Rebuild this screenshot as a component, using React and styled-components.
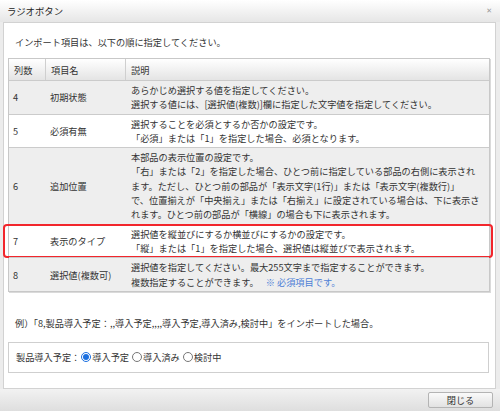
import React from 'react';
import styled, { createGlobalStyle } from 'styled-components';

const GlobalStyle = createGlobalStyle`
  html, body {
    margin: 0;
    padding: 0;
  }
  body {
    width: 500px;
    height: 411px;
    overflow: hidden;
    font-family: "Noto Sans CJK JP", "Noto Sans", sans-serif;
    font-size: 9.2px;
    color: #333;
    background: #ececec;
  }
`;

const rows = [
  {
    no: '4',
    name: '初期状態',
    lines: [
      'あらかじめ選択する値を指定してください。',
      '選択する値には、[選択値(複数)]欄に指定した文字値を指定してください。',
    ],
  },
  {
    no: '5',
    name: '必須有無',
    lines: [
      '選択することを必須とするか否かの設定です。',
      '「必須」または「1」を指定した場合、必須となります。',
    ],
  },
  {
    no: '6',
    name: '追加位置',
    lines: [
      '本部品の表示位置の設定です。',
      '「右」または「2」を指定した場合、ひとつ前に指定している部品の右側に表示され',
      'ます。ただし、ひとつ前の部品が「表示文字(1行)」または「表示文字(複数行)」',
      'で、位置揃えが「中央揃え」または「右揃え」に設定されている場合は、下に表示さ',
      'れます。ひとつ前の部品が「横線」の場合も下に表示されます。',
    ],
  },
  {
    no: '7',
    name: '表示のタイプ',
    marked: true,
    lines: [
      '選択値を縦並びにするか横並びにするかの設定です。',
      '「縦」または「1」を指定した場合、選択値は縦並びで表示されます。',
    ],
  },
  {
    no: '8',
    name: '選択値(複数可)',
    lines: [
      '選択値を指定してください。最大255文字まで指定することができます。',
      '複数指定することができます。',
    ],
    note: '※ 必須項目です。',
  },
];

function App() {
  return (
    <>
      <GlobalStyle />
      <Dialog>
        <TitleBar>
          <Title>ラジオボタン</Title>
          <CloseX>✕</CloseX>
        </TitleBar>
        <Frame>
          <Intro>インポート項目は、以下の順に指定してください。</Intro>
          <Table>
            <HeadRow>
              <HeadCell>列数</HeadCell>
              <HeadCell $divider>項目名</HeadCell>
              <HeadCell $divider>説明</HeadCell>
            </HeadRow>
            {rows.map((r, i) => (
              <Row key={r.no} $shade={i % 2 === 0} $marked={r.marked}>
                <Cell>{r.no}</Cell>
                <Cell>{r.name}</Cell>
                <Desc>
                  {r.lines.map((l, j) => (
                    <Line key={j}>
                      {l}
                      {r.note && j === r.lines.length - 1 && <Note>{r.note}</Note>}
                    </Line>
                  ))}
                </Desc>
              </Row>
            ))}
          </Table>
          <Example>
            例）「8,製品導入予定：,,導入予定,,,,導入予定,導入済み,検討中」をインポートした場合。
          </Example>
          <Preview>
            <span>製品導入予定：</span>
            <RadioLabel>
              <Radio type="radio" name="plan" defaultChecked />
              導入予定
            </RadioLabel>
            <RadioLabel>
              <Radio type="radio" name="plan" />
              導入済み
            </RadioLabel>
            <RadioLabel>
              <Radio type="radio" name="plan" />
              検討中
            </RadioLabel>
          </Preview>
        </Frame>
        <Footer>
          <CloseButton>閉じる</CloseButton>
        </Footer>
      </Dialog>
    </>
  );
}

const Dialog = styled.div`
  width: 500px;
  height: 411px;
  display: flex;
  flex-direction: column;
  background: #ececec;
`;

const TitleBar = styled.div`
  height: 22px;
  flex: none;
  display: flex;
  align-items: center;
  justify-content: space-between;
  padding: 0 8px 0 7px;
  background: linear-gradient(#ffffff, #e6e6e6);
`;

const Title = styled.div`
  font-size: 9.4px;
  color: #222;
`;

const CloseX = styled.div`
  font-size: 7px;
  color: #9a9a9a;
  font-family: "DejaVu Sans", sans-serif;
`;

const Frame = styled.div`
  box-sizing: border-box;
  height: 367px;
  flex: none;
  margin: 0 4px 0 3px;
  padding: 0 4px;
  background: #fff;
  border: 1px solid #d2d2d2;
  display: flex;
  flex-direction: column;
`;

const Intro = styled.div`
  line-height: 14px;
  padding: 12px 0 0 7px;
  margin-bottom: 9px;
`;

const Table = styled.div`
  border: 1px solid #c8c8c8;
  box-shadow: 1px 1px 0 #dadada;
  margin-right: 1px;
`;

const HeadRow = styled.div`
  display: grid;
  grid-template-columns: 36px 80px 1fr;
  height: 21px;
  background: linear-gradient(#ffffff, #e4e4e4);
`;

const HeadCell = styled.div`
  display: flex;
  align-items: center;
  padding-left: 5px;
  border-left: ${(p) => (p.$divider ? '1px solid #cfcfcf' : 'none')};
`;

const Row = styled.div`
  position: relative;
  display: grid;
  grid-template-columns: 37px 80px 1fr;
  border-top: 1px solid #cbcbcb;
  background: ${(p) => (p.$shade ? '#eeeeee' : '#ffffff')};

  &::after {
    content: '';
    display: ${(p) => (p.$marked ? 'block' : 'none')};
    position: absolute;
    top: -1px;
    bottom: -1px;
    left: -6px;
    right: -4px;
    border: 2px solid #f2262c;
    border-radius: 4px;
    pointer-events: none;
  }
`;

const Cell = styled.div`
  display: flex;
  align-items: center;
  padding-left: 4px;
`;

const Desc = styled.div`
  padding: 2px 4px 2px 5px;
`;

const Line = styled.div`
  line-height: 14.3px;
  white-space: nowrap;
`;

const Note = styled.span`
  color: #4d7fd6;
  margin-left: 7px;
`;

const Example = styled.div`
  line-height: 14px;
  padding-left: 7px;
  margin-top: 24px;
`;

const Preview = styled.div`
  margin-top: 12px;
  height: 29px;
  border: 1px solid #cfcfcf;
  margin-right: 2px;
  display: flex;
  align-items: center;
  padding-left: 7px;
`;

const RadioLabel = styled.label`
  display: inline-flex;
  align-items: center;
  margin-right: 2px;
`;

const Radio = styled.input`
  width: 10px;
  height: 10px;
  margin: 0 1px 0 1px;
  accent-color: #1a6fe0;
`;

const Footer = styled.div`
  flex: 1;
  display: flex;
  align-items: center;
  justify-content: flex-end;
  padding-right: 7px;
  background: linear-gradient(#f2f2f2, #dedede);
`;

const CloseButton = styled.button`
  width: 65px;
  height: 16px;
  padding: 0;
  font-family: inherit;
  font-size: 9.2px;
  color: #333;
  border: 1px solid #b4b4b4;
  border-radius: 2px;
  background: linear-gradient(#fafafa, #e2e2e2);
`;

export default App;
